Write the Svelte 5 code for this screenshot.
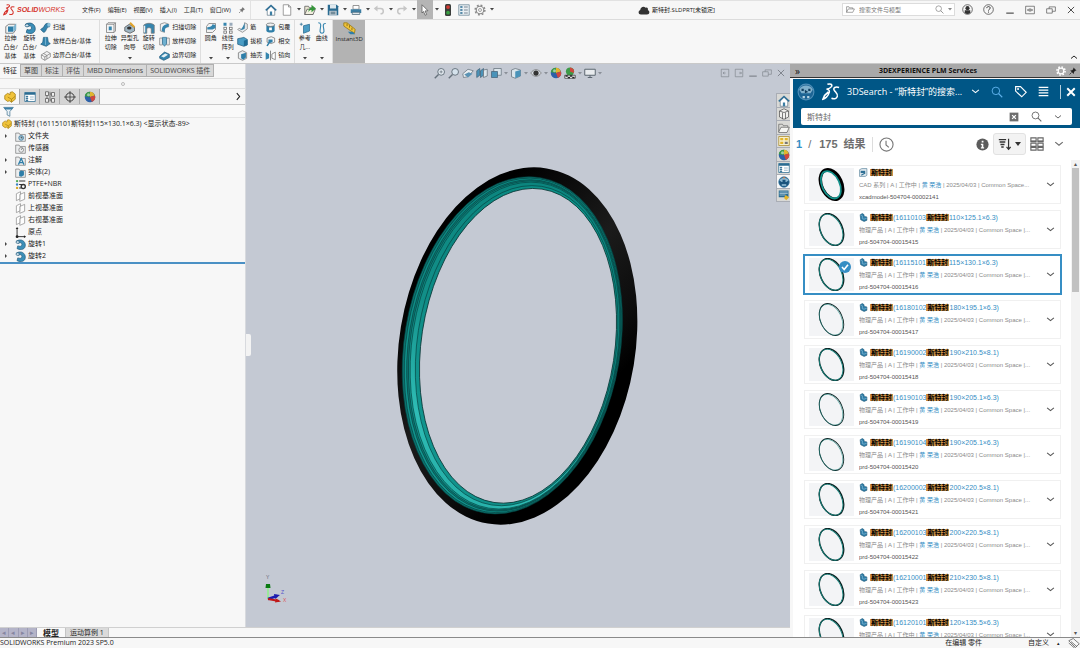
<script lang="ts">
  type Result = { code?: string; dims?: string; id: string; weight: number };

  let query = $state('斯特封');
  let fileQuery = $state('');
  let selected = $state('prd-504704-00015416');

  const menus = ['文件(F)', '编辑(E)', '视图(V)', '插入(I)', '工具(T)', '窗口(W)'];

  const quick = [
    { icon: 'home', label: '主页' },
    { icon: 'page', label: '新建', drop: true },
    { icon: 'open', label: '打开', drop: true },
    { icon: 'save', label: '保存', drop: true },
    { icon: 'print', label: '打印', drop: true },
    { icon: 'undo', label: '撤销', drop: true },
    { icon: 'redo', label: '重做', drop: true },
    { icon: 'cursor', label: '选择', drop: true, on: true },
    { icon: 'traffic', label: '重建模型' },
    { icon: 'list', label: '文件属性' },
    { icon: 'gear', label: '选项', drop: true }
  ];

  const ribbon = [
    {
      big: [
        { icon: 'extrude', lines: ['拉伸', '凸台/', '基体'] },
        { icon: 'revolve', lines: ['旋转', '凸台/', '基体'] }
      ],
      cols: [[
        { icon: 'sweep', text: '扫描' },
        { icon: 'loft', text: '放样凸台/基体' },
        { icon: 'boundary', text: '边界凸台/基体' }
      ]]
    },
    {
      big: [
        { icon: 'cut', lines: ['拉伸', '切除'] },
        { icon: 'hole', lines: ['异型孔', '向导'], drop: true },
        { icon: 'revcut', lines: ['旋转', '切除'] }
      ],
      cols: [[
        { icon: 'sweepcut', text: '扫描切除' },
        { icon: 'loftcut', text: '放样切除' },
        { icon: 'boundcut', text: '边界切除' }
      ]]
    },
    {
      big: [
        { icon: 'fillet', lines: ['圆角'], drop: true },
        { icon: 'pattern', lines: ['线性', '阵列'], drop: true }
      ],
      cols: [
        [
          { icon: 'rib', text: '筋' },
          { icon: 'draft', text: '拔模' },
          { icon: 'shell', text: '抽壳' }
        ],
        [
          { icon: 'wrap', text: '包覆' },
          { icon: 'intersect', text: '相交' },
          { icon: 'mirror', text: '镜向' }
        ]
      ]
    },
    {
      big: [
        { icon: 'refgeo', lines: ['参考', '几...'], drop: true },
        { icon: 'curve', lines: ['曲线'], drop: true }
      ],
      cols: []
    }
  ];

  const commandTabs = ['特征', '草图', '标注', '评估', 'MBD Dimensions', 'SOLIDWORKS 插件'];
  const panelTabs = ['part', 'props', 'config', 'target', 'ball'];

  const tree = [
    { icon: 'folderHist', text: '文件夹', open: true },
    { icon: 'folderSensor', text: '传感器' },
    { icon: 'folderNote', text: '注解', open: true },
    { icon: 'folderBody', text: '实体(2)', open: true },
    { icon: 'material', text: 'PTFE+NBR' },
    { icon: 'plane', text: '前视基准面' },
    { icon: 'plane', text: '上视基准面' },
    { icon: 'plane', text: '右视基准面' },
    { icon: 'origin', text: '原点' },
    { icon: 'revolve', text: '旋转1', open: true },
    { icon: 'revolve', text: '旋转2', open: true }
  ];

  const hud = [
    { icon: 'zoomfit' },
    { icon: 'zoomarea' },
    { icon: 'prevview' },
    { icon: 'section' },
    { icon: 'orient', drop: true },
    { icon: 'cube', drop: true },
    { icon: 'eye', drop: true },
    { icon: 'ball' },
    { icon: 'scene', drop: true },
    { icon: 'monitor', drop: true }
  ];

  const docButtons = ['paneLeft', 'paneRight', 'min', 'restore', 'close'];
  const sideTabs = ['home', 'cylinder', 'folder', 'palette', 'ball', 'props', 'globe', 'forum'];

  const results: Result[] = [
    { id: 'xcadmodel-504704-00002141', weight: 4 },
    { code: '16110103', dims: '110×125.1×6.3', id: 'prd-504704-00015415', weight: 2 },
    { code: '16115101', dims: '115×130.1×6.3', id: 'prd-504704-00015416', weight: 2 },
    { code: '16180102', dims: '180×195.1×6.3', id: 'prd-504704-00015417', weight: 1 },
    { code: '16190002', dims: '190×210.5×8.1', id: 'prd-504704-00015418', weight: 2 },
    { code: '16190103', dims: '190×205.1×6.3', id: 'prd-504704-00015419', weight: 1 },
    { code: '16190104', dims: '190×205.1×6.3', id: 'prd-504704-00015420', weight: 1 },
    { code: '16200002', dims: '200×220.5×8.1', id: 'prd-504704-00015421', weight: 2 },
    { code: '16200103', dims: '200×220.5×8.1', id: 'prd-504704-00015422', weight: 2 },
    { code: '16210001', dims: '210×230.5×8.1', id: 'prd-504704-00015423', weight: 2 },
    { code: '16120101', dims: '120×135.5×6.3', id: 'prd-504704-00015424', weight: 2 }
  ];

  // nested ellipses of the seal, from the outer lip to the bore
  const lip = { cx: 512.3, cy: 345.3, rx: 108, ry: 170, a: 9.5 };
  const bore = { cx: 518, cy: 345.8, rx: 96.7, ry: 158.5, a: 8.7 };
  const bands = [
    { t: 0, fill: '#0b7470' },
    { t: 0.12, fill: 'url(#tealMid)' },
    { t: 0.26, fill: '#0e7773' },
    { t: 0.36, fill: 'url(#tealMid)' },
    { t: 0.46, fill: 'url(#tealHi)' },
    { t: 0.76, fill: 'url(#tealMid)' }
  ].map(({ t, fill }) => ({
    fill,
    cx: lip.cx + (bore.cx - lip.cx) * t,
    cy: lip.cy + (bore.cy - lip.cy) * t,
    rx: lip.rx + (bore.rx - lip.rx) * t,
    ry: lip.ry + (bore.ry - lip.ry) * t,
    a: lip.a + (bore.a - lip.a) * t
  }));

  const folder = '<path d="M1 3h5l1 2h8v10H1z" fill="#eceeef" stroke="#777"/>';
  const icons: Record<string, string> = {
    pin: '<path d="M9 2l5 5-2 .5-2.500 2.500-.5 3-6-6 3-.5L8.500 4z" fill="#777"/><path d="M5 11l-3 3" stroke="#777" stroke-width="1.500"/>',
    home: '<path d="M3 8v7h10V8L8 3z" fill="#fff" stroke="#6a7f8c"/><path d="M1 8.500L8 2l7 6.500" fill="none" stroke="#2f6f96" stroke-width="2"/><path d="M6.500 10h3v5h-3z" fill="#3c7ea3"/>',
    page: '<path d="M3 1h7l3 3v11H3z" fill="#fff" stroke="#808080"/><path d="M10 1v3h3" fill="none" stroke="#808080"/>',
    open: '<path d="M1 3h5l1 2h5v9H1z" fill="#e9e6d2" stroke="#555"/><path d="M4 7h11l-3 7H1z" fill="#f2efdf" stroke="#555"/><path d="M6 11c0-5 2-6 4-6V1l6 5-6 5V8c-2 0-3 .5-4 3z" fill="#35953b"/>',
    save: '<path d="M1 1h12l2 2v12H1z" fill="#2b6c92"/><path d="M4 1h8v5H4z" fill="#dfe9ef"/><path d="M3 9h10v6H3z" fill="#b9c6ce"/><path d="M5 11h6M5 13h6" stroke="#3b5f73"/>',
    print: '<path d="M4 2h8v5H4z" fill="#fff" stroke="#777"/><path d="M1 7h14v5H1z" fill="#3c7ea3"/><path d="M3 11h10v3H3z" fill="#dfe6ea" stroke="#4b6a7b"/>',
    undo: '<path d="M3 6h7c5 0 5 7 0 7" fill="none" stroke="#c6c6c6" stroke-width="2"/><path d="M6 2L1 6l5 4z" fill="#c6c6c6"/>',
    redo: '<path d="M13 6H6c-5 0-5 7 0 7" fill="none" stroke="#c6c6c6" stroke-width="2"/><path d="M10 2l5 4-5 4z" fill="#c6c6c6"/>',
    cursor: '<path d="M4 1l8 8-4 .3 2.200 4.700-2 1-2.200-5L4 12z" fill="#fff" stroke="#555"/>',
    traffic: '<rect x="4" y="0" width="8" height="16" rx="2" fill="#3a3d3a"/><circle cx="8" cy="4" r="2.500" fill="#d33a33"/><circle cx="8" cy="11.500" r="2.500" fill="#3aa043"/>',
    list: '<path d="M1 1h14v14H1z" fill="#e7eef2" stroke="#6c8797"/><path d="M3 3h3v2H3zM3 7h3v2H3zM3 11h3v2H3z" fill="#2b6c92"/><path d="M8 4h5M8 8h5M8 12h5" stroke="#567"/>',
    gear: '<circle cx="8" cy="8" r="5" fill="none" stroke="#8a8a8a" stroke-width="1.500"/><circle cx="8" cy="8" r="6.500" fill="none" stroke="#8a8a8a" stroke-width="2" stroke-dasharray="2.500 2.600"/><circle cx="8" cy="8" r="2" fill="none" stroke="#8a8a8a"/>',
    gearWhite: '<circle cx="8" cy="8" r="4.500" fill="none" stroke="#fff" stroke-width="2"/><circle cx="8" cy="8" r="6.500" fill="none" stroke="#fff" stroke-width="2.500" stroke-dasharray="2.500 2.600"/>',
    pinDark: '<path d="M9 1l6 6-2.500.5-2.500 2.500-.5 4-7-7 4-.5L8.500 4z" fill="#222"/><path d="M5 11l-4 4" stroke="#222" stroke-width="1.500"/>',
    extrude: '<path d="M1 6l4-3h9v8l-3 4H1z" fill="#eef1f2" stroke="#666"/><path d="M4 6h7v7H4z" fill="#2e7ea8"/><path d="M11 6l4-4v8l-4 3z" fill="#7cb4d0"/>',
    revolve: '<path d="M2 3c7-4 13 0 13 6s-6 8-12 5l1-4c3 1 6 1 6-2S8 5 5 6z" fill="#3c8fb8" stroke="#205a7c"/><ellipse cx="4" cy="4.500" rx="2.500" ry="2" fill="#cfe3ee" stroke="#205a7c"/>',
    sweep: '<path d="M1 11l4 4c5 0 3-8 9-8l-1-5C5 1 7 9 3 9z" fill="#3585ae" stroke="#1d587a"/><ellipse cx="13" cy="4" rx="2.500" ry="3" fill="#8fc2db"/>',
    loft: '<path d="M5 2h6l1 7 3 2-6 4-8-3 3-3z" fill="#3585ae" stroke="#1d587a"/><path d="M8 2v11" stroke="#8fc2db"/>',
    boundary: '<path d="M2 7l8-5 5 3v5l-8 5-5-3z" fill="#f3f3f3" stroke="#777"/><path d="M2 7l5 3 8-5M7 10v5M5 5l5 3v5" fill="none" stroke="#777"/>',
    cut: '<path d="M2 3l2-2h10v11l-2 2H2z" fill="#f4f4f4" stroke="#777"/><path d="M2 3h10v11M12 3l2-2" fill="none" stroke="#777"/><rect x="5" y="6" width="4" height="5" fill="#3585ae"/>',
    hole: '<path d="M1 7l6-4 7 4v5l-6 3-7-3z" fill="#9fb6c3" stroke="#555"/><ellipse cx="7" cy="8" rx="3" ry="2" fill="#333"/><path d="M8 1l6 6" stroke="#e2a52c" stroke-width="2.500"/>',
    revcut: '<path d="M1 4c4-3 10-3 14 0v11h-4V9c-1-2-5-2-6 0v6H1z" fill="#3585ae" stroke="#777"/><path d="M2 5v9" stroke="#eee" stroke-width="2"/>',
    sweepcut: '<path d="M2 3l6-2 6 2v4l-6 1v7l-6-2z" fill="#f2f2f2" stroke="#777"/><path d="M4 13C4 6 8 3 14 3v4c-4 0-6 3-6 8z" fill="#3585ae"/>',
    loftcut: '<path d="M1 3h4v10H1zM11 3h4v10h-4z" fill="#f2f2f2" stroke="#777"/><path d="M5 2h6v9l-3 4-3-4z" fill="#6fb0cf" stroke="#2b6c92"/>',
    boundcut: '<path d="M1 9l7-6 7 3v5l-8 4-6-3z" fill="#3585ae" stroke="#1d587a"/><path d="M3 9l6-4 4 2-6 4z" fill="#e6f0f5"/>',
    fillet: '<path d="M2 6l3-4h9v8l-4 4H2z" fill="#f2f2f2" stroke="#777"/><path d="M3 7c4 0 6-1 7-4l4 1v4l-4 2H3z" fill="#3585ae"/>',
    pattern: '<g fill="#3585ae"><rect x="2" y="1" width="4" height="4"/><rect x="10" y="1" width="4" height="4" fill="#9ab"/></g><g fill="#fff" stroke="#666"><rect x="2.500" y="7" width="3.500" height="3"/><rect x="10" y="7" width="3.500" height="3"/><rect x="2.500" y="12" width="3.500" height="3"/><rect x="10" y="12" width="3.500" height="3"/></g>',
    rib: '<path d="M1 11l7 4 7-5V3l-4-2v7l-4 3-4-2z" fill="#e9edef" stroke="#777"/><path d="M11 1v9l-7 2C8 9 9 6 11 1z" fill="#3585ae"/>',
    draft: '<path d="M1 4l9-2 5 3v8l-5 2-9-3z" fill="#4a9cc4" stroke="#1d587a"/><path d="M10 7l5-2v8l-5 2z" fill="#1f6b94"/>',
    shell: '<path d="M2 4l6-3 6 3v8l-6 3-6-3z" fill="#e9edef" stroke="#666"/><path d="M6 6l7-2v7l-4 3-3-2z" fill="#2e7ea8"/>',
    wrap: '<path d="M2 4v9c2 3 10 3 12 0V4z" fill="#2e7ea8"/><ellipse cx="8" cy="4" rx="6" ry="2.500" fill="#eef1f2" stroke="#666"/><path d="M6 8h4v4H6z" fill="#fff"/>',
    intersect: '<path d="M3 3l6-2 5 2v6l-5 2-6-2z" fill="#f4f4f4" stroke="#666"/><path d="M5 5h6v4l-4 1-3 5-2-1 3-5z" fill="#2e7ea8"/>',
    mirror: '<path d="M1 3l5 3v6l-5 2z" fill="#3585ae"/><path d="M8 1v14" stroke="#555"/><path d="M15 3l-5 3v6l5 2z" fill="#fff" stroke="#666"/>',
    refgeo: '<path d="M6 5l8-2v9l-8 3z" fill="#4a9cc4" stroke="#2b6c92"/><path d="M1 3h4M3 1v4" stroke="#2b6c92"/>',
    curve: '<path d="M3 1c8 0-2 14 5 14S5 1 13 2" fill="none" stroke="#3585ae" stroke-width="1.500"/>',
    ruler: '<path d="M1 1h4l10 8-1 5L1 5z" fill="#f0c33a" stroke="#9a7a18"/><path d="M5 2v3M8 4v3M11 7v3" stroke="#7c6212"/><path d="M6 12h6l3 3H9z" fill="#2e7ea8"/>',
    cloud: '<path d="M4 14c-4 0-4-5-1-6 0-4 5-6 7-3 3-1 4 2 3 3 3 1 3 6-1 6z" fill="#333"/>',
    folderOpen: '<path d="M1 13V3h4l1 2h6v2" fill="none" stroke="#666"/><path d="M1 13l3-6h11l-3 6z" fill="none" stroke="#666"/>',
    search: '<circle cx="6.500" cy="6.500" r="5" fill="none" stroke="currentColor" stroke-width="1.300"/><path d="M10 10l5 5" stroke="currentColor" stroke-width="1.500"/>',
    user: '<circle cx="8" cy="8" r="7" fill="none" stroke="#333"/><circle cx="8" cy="6" r="3" fill="#333"/><path d="M4 13V9h8v4c-2 2-6 2-8 0z" fill="#333"/>',
    help: '<circle cx="8" cy="8" r="7" fill="none" stroke="#333"/><path d="M5.500 6c0-3 5-3 5 0 0 1.500-2.500 1.700-2.500 3.500M8 11v1.500" fill="none" stroke="#333" stroke-width="1.400"/>',
    min: '<path d="M2 13h12" stroke="currentColor" stroke-width="1.800"/>',
    dockWin: '<path d="M1 2h14v12H1z" fill="none" stroke="#444"/><path d="M4 8h8M6 6L4 8l2 2M10 6l2 2-2 2M8 5v6" fill="none" stroke="#444"/>',
    restore: '<path d="M1 6h9v7H1zM5 6V3h10v7h-5" fill="none" stroke="currentColor"/>',
    close: '<path d="M3 3l10 10M13 3L3 13" stroke="currentColor" stroke-width="1.500"/>',
    part: '<path d="M1 6l4-3 3 2V2l3-1 4 3v7l-5 4-3-2-2 1-4-3z" fill="#f0c33a" stroke="#a47d12"/><path d="M5 8l5 3 5-4M10 11v4" fill="none" stroke="#a47d12"/>',
    props: '<path d="M1 2h14v12H1z" fill="#fff" stroke="#2b6c92"/><path d="M1 2h14v3H1z" fill="#2b6c92"/><path d="M3 7h2v1H3zM3 9.500h2v1H3zM3 12h2v1H3z" fill="#2b6c92" stroke="#2b6c92"/><path d="M8 8h5M8 11h5" stroke="#7ba3ba"/>',
    config: '<path d="M2 1h4v5H2zM2 10h4v5H2zM10 2h4v5h-4zM10 10h4v5h-4z" fill="#eee" stroke="#555"/><path d="M4 6v4M8 1v13M8 4h2M8 12h2" stroke="#555"/>',
    target: '<circle cx="8" cy="8" r="5.500" fill="none" stroke="#333" stroke-width="1.300"/><path d="M8 0v16M0 8h16" stroke="#333"/>',
    ball: '<circle cx="8" cy="8" r="7" fill="#2c61a8"/><path d="M8 8V1a7 7 0 0 1 6.500 5z" fill="#e0b52c"/><path d="M8 8V1a7 7 0 0 0-7 6z" fill="#3d9a46"/><path d="M8 8l6.500-2a7 7 0 0 1-4 8.500z" fill="#d0473d"/><circle cx="6" cy="5" r="2" fill="#fff" opacity=".5"/>',
    filter: '<path d="M1 2h14l-5 6v7l-4-2V8z" fill="#e9f1f6" stroke="#3a6d8c"/><path d="M1 2h14l-2 3H3z" fill="#3a7ea5"/>',
    folderHist: folder + '<circle cx="9" cy="10" r="3.500" fill="#a9cadb" stroke="#2b6c92"/><path d="M9 8v2h2" fill="none" stroke="#222"/>',
    folderSensor: folder + '<circle cx="9" cy="10" r="3.500" fill="none" stroke="#777"/><path d="M9 10l2-3" stroke="#555"/>',
    folderNote: folder + '<path d="M5 14l4-9 4 9M6.500 11h5" fill="none" stroke="#2e7ea8" stroke-width="1.800"/>',
    folderBody: folder + '<path d="M6 7l3-2 4 1v6l-4 2-3-1z" fill="#2e7ea8"/>',
    material: '<g stroke="#333" stroke-width="1.500"><path d="M6 3h9M6 8h5M6 13h3"/></g><circle cx="3" cy="3" r="1.700" fill="#4fa854"/><circle cx="3" cy="8" r="1.700" fill="#3b82c4"/><circle cx="3" cy="13" r="1.700" fill="#d7a728"/><circle cx="12" cy="11" r="3" fill="none" stroke="#333" stroke-width="2"/>',
    plane: '<path d="M2 4l6-3v10l-6 3z" fill="#fff" stroke="#888"/><path d="M7 5l7-3v10l-7 3z" fill="#fff" fill-opacity=".7" stroke="#888"/>',
    origin: '<path d="M3 2v12h12" fill="none" stroke="#222" stroke-width="1.300"/><path d="M3 0l2 3H1zM16 14l-3-2v4z" fill="#222"/><circle cx="3" cy="14" r="2" fill="#222"/>',
    zoomfit: '<circle cx="9.500" cy="6.500" r="4.500" fill="#e3eaf0" stroke="#66727c" stroke-width="1.300"/><path d="M6 10l-5 5" stroke="#66727c" stroke-width="2"/><path d="M7.500 6.500h4M9.500 4.500v4" stroke="#66727c"/>',
    zoomarea: '<circle cx="9.500" cy="6.500" r="4.500" fill="#d5e2ec" stroke="#66727c" stroke-width="1.300"/><path d="M6 10l-5 5" stroke="#66727c" stroke-width="2"/>',
    prevview: '<path d="M1 9l7-6 7 2-7 8-6 1z" fill="#e8edf0" stroke="#66727c"/><path d="M3 10l6-3 5 2-6 5z" fill="#5b93b4"/>',
    section: '<path d="M1 5l4-3v9l-4 3zM6 5l4-3v9l-4 3z" fill="#4a93b9" stroke="#47647a"/><path d="M10 4l5-1v9l-5 2z" fill="#dbe5eb" stroke="#66727c"/>',
    orient: '<path d="M5 2h10v9H5z" fill="#dbe5eb" stroke="#66727c"/><path d="M2 6h8v8H2z" fill="#4a93b9" stroke="#47647a"/>',
    cube: '<path d="M2 4l5-2 7 2v8l-7 3-5-2z" fill="#dbe5eb" stroke="#66727c"/><path d="M7 6l7-2v8l-7 3z" fill="#4a93b9"/>',
    eye: '<path d="M1 8c4-6 10-6 14 0-4 6-10 6-14 0z" fill="#d5dbe1" stroke="#777"/><circle cx="8" cy="8" r="3.500" fill="#333"/>',
    scene: '<circle cx="8" cy="6" r="5.500" fill="#3d9a46"/><path d="M8 6V.5A5.500 5.500 0 0 1 13 8z" fill="#d0473d"/><path d="M1 11h14v4H1z" fill="#fff" stroke="#333"/><path d="M2 11h3v2H2zM8 11h3v2H8zM5 13h3v2H5zM11 13h3v2h-3z" fill="#222"/>',
    monitor: '<path d="M1 3h14v8H1z" fill="#e8ebee" stroke="#59646e" stroke-width="1.300"/><path d="M8 11v3M5 14h6" stroke="#59646e" stroke-width="1.300"/>',
    paneLeft: '<path d="M2 2h12v12H2z" fill="none" stroke="currentColor"/><path d="M5 8h4M7 6L5 8l2 2" fill="none" stroke="currentColor"/>',
    paneRight: '<path d="M2 2h12v12H2z" fill="none" stroke="currentColor"/><path d="M12 8H8M10 6l2 2-2 2" fill="none" stroke="currentColor"/>',
    cylinder: '<path d="M2 4l6-3 6 3v8l-6 3-6-3z" fill="#f1f1ee" stroke="#555"/><path d="M2 4l6 2 6-2M6 6v9M10 6v9" fill="none" stroke="#555"/>',
    folder: '<path d="M1 3h5l1 2h6v2M1 3v11h11l3-7H4l-3 6" fill="#f5f5f2" stroke="#666"/>',
    palette: '<path d="M1 2h14v12H1z" fill="#f6efcf" stroke="#a98b2a"/><path d="M3 4h4v3H3zM9 4h4v3H9zM3 9h4v3H3z" fill="#e2b42a"/><path d="M9 9h4v3H9z" fill="#777"/>',
    globe: '<circle cx="8" cy="8" r="7" fill="#1b547c" stroke="#3d7fa8"/><path d="M2 6c2-5 10-5 12 0l-3 2H5z" fill="#8db9d2"/><path d="M6 5h4v3H6z" fill="#1b547c"/><path d="M8 1l2 2H6z" fill="#e07a3a"/><path d="M5 11h6v2H5z" fill="#9cc6dd"/>',
    compass: '<circle cx="8" cy="8" r="7" fill="#1d6494" stroke="#4f8fb8"/><path d="M2 6c2-5 10-5 12 0l-2 3H4z" fill="#7fb0cc"/><path d="M4 5h2v2H4zM10 5h2v2h-2zM7 6l3 2-3 1z" fill="#123f60"/><path d="M5 11.500h2v2H5zM9 11.500h2v2H9z" fill="#b8d4e4"/>',
    forum: '<path d="M1 2h13v9H1z" fill="#2b6c92"/><path d="M2 4h11M2 6h11M2 8h8" stroke="#b7d1df"/><path d="M10 8l5 3-4 4-3-3z" fill="#e2b42a"/>',
    tag: '<path d="M2 2h6l7 7-5.500 5.500-7.500-7z" fill="none" stroke="#fff" stroke-width="1.400"/><circle cx="5" cy="5" r="1.200" fill="#fff"/>',
    burger: '<path d="M1 2h14M1 6h14M1 10h14M1 14h14" stroke="#fff" stroke-width="1.800"/>',
    closeBold: '<path d="M3 3l10 10M13 3L3 13" stroke="#fff" stroke-width="2.600"/>',
    chevron: '<path d="M2 5l6 5 6-5" fill="none" stroke="currentColor" stroke-width="2"/>',
    clear: '<rect x="1" y="1" width="14" height="14" fill="#6e6e6e"/><path d="M5 5l6 6M11 5l-6 6" stroke="#fff" stroke-width="2"/>',
    clock: '<circle cx="8" cy="8" r="7" fill="none" stroke="#777" stroke-width="1.200"/><path d="M7.500 4v4.500l3 2.500" fill="none" stroke="#777" stroke-width="1.200"/>',
    info: '<circle cx="8" cy="8" r="7.500" fill="#5c5c5c"/><path d="M7 3.500h2.200v2H7zM6 7h3v4.500h1V13H6v-1.500h1v-3H6z" fill="#fff"/>',
    sort: '<path d="M1 2h9M2 5h7M3 8h5M4 11h3" stroke="#333" stroke-width="1.800"/><path d="M13 1v12M10.500 11l2.500 3 2.500-3" fill="none" stroke="#333" stroke-width="1.500"/>',
    grid: '<g fill="none" stroke="#666" stroke-width="1.300"><path d="M1 1h6v4H1zM9 1h6v4H9zM1 7h6v4H1zM9 7h6v4H9z"/><path d="M1 12h6v3H1zM9 12h6v3H9z"/></g><path d="M1 5h6M9 5h6M1 11h6M9 11h6" stroke="#666" stroke-width="2"/>',
    cad: '<path d="M1 3l4-2h9v12l-3 2H1z" fill="#dfe8ed" stroke="#3f6f8b"/><path d="M3 5h8v4H3z" fill="#2e6f95"/><path d="M4 13l7-4" stroke="#2e6f95" stroke-width="2"/>',
    product: '<path d="M2 3l4-2 3 2v3l5 1v6l-5 2-6-3z" fill="#2e7ea8" stroke="#174e6e"/><path d="M2 3l4 2v5l3 1 5-2" fill="none" stroke="#9cc6dd"/>',
    tags: '<path d="M1 5l6-3 8 7-5 5z" fill="none" stroke="#555"/><path d="M1 8l8 7M4 6l8 7" stroke="#555"/>'
  };
</script>

{#snippet icon(name: string, size = 11)}
  <svg class="icon" width={size} height={size} viewBox="0 0 16 16" aria-hidden="true">{@html icons[name]}</svg>
{/snippet}

{#snippet arrow()}
  <svg class="icon" width="4" height="3" viewBox="0 0 4 3" aria-hidden="true"><path d="M0 0h4L2 2.500z" fill="currentColor" /></svg>
{/snippet}

{#snippet dsLogo(color: string, w: number)}
  <svg class="icon" width={w} height={w} viewBox="0 0 20 20" fill="none" stroke={color} stroke-width="1.700" aria-hidden="true">
    <path d="M6 1.500c3-1 6 0 4.500 2.500C9 6 5 7 5 7s4-.3 3 3.500C7 15 3 17.500 1 18c1-3 3-6 6-8" />
    <path d="M19 5c-4-1.500-7 .5-5.500 3s4.500 4 3.500 7-4 3-6.500 2" />
  </svg>
{/snippet}

<div class="app">
  <header class="titlebar">
    <div class="brand">
      {@render dsLogo('#d5322b', 12)}
      <span><b>SOLID</b>WORKS</span>
    </div>
    <nav class="menus">
      {#each menus as menu}
        <button>{menu}</button>
      {/each}
      <button aria-label="固定">{@render icon('pin', 8)}</button>
    </nav>
    <div class="quick">
      {#each quick as item}
        <button class="tool" class:on={item.on} aria-label={item.label}>{@render icon(item.icon, 12)}</button>
        {#if item.drop}<button class="drop" aria-label="{item.label}菜单">{@render arrow()}</button>{/if}
      {/each}
    </div>
    <div class="doc-title">{@render icon('cloud', 12)}<span>斯特封.SLDPRT[未锁定]</span></div>
    <div class="file-search">
      {@render icon('folderOpen', 9)}
      <input type="text" aria-label="搜索文件与模型" placeholder="搜索文件与模型" bind:value={fileQuery} />
      {@render icon('search', 9)}
      {@render arrow()}
    </div>
    <div class="window-buttons">
      <button aria-label="用户">{@render icon('user', 11)}</button>
      <button aria-label="帮助">{@render icon('help', 11)}</button>
      <button aria-label="最小化">{@render icon('min', 10)}</button>
      <button aria-label="停靠">{@render icon('dockWin', 10)}</button>
      <button aria-label="还原">{@render icon('restore', 10)}</button>
      <button aria-label="关闭">{@render icon('close', 10)}</button>
    </div>
  </header>

  <section class="ribbon">
    {#each ribbon as group}
      <div class="group">
        {#each group.big as cmd}
          <button class="big">
            {@render icon(cmd.icon, 12)}
            {#each cmd.lines as line}<span>{line}</span>{/each}
            {#if cmd.drop}<i>{@render arrow()}</i>{/if}
          </button>
        {/each}
        {#each group.cols as col}
          <div class="col">
            {#each col as cmd}
              <button class="small">{@render icon(cmd.icon, 11)}{cmd.text}</button>
            {/each}
          </div>
        {/each}
      </div>
    {/each}
    <button class="instant">{@render icon('ruler', 13)}<span>Instant3D</span></button>
    <button class="collapse" aria-label="折叠">{@render icon('chevron', 8)}</button>
  </section>

  <main>
    <div class="document">
      <div class="workspace">
        <aside class="manager">
          <div class="command-tabs">
            {#each commandTabs as tab, i}
              <button class:active={i === 0}>{tab}</button>
            {/each}
          </div>
          <div class="grip"><span></span></div>
          <div class="panel-tabs">
            {#each panelTabs as tab, i}
              <button class:active={i === 0} aria-label={tab}>{@render icon(tab, 12)}</button>
            {/each}
            <button class="more" aria-label="更多">{@render icon('chevron', 9)}</button>
          </div>
          <div class="filter">{@render icon('filter', 11)}</div>
          <div class="tree">
            <div class="root">{@render icon('part', 10)}<span>斯特封 (16115101斯特封115×130.1×6.3) &lt;显示状态-89&gt;</span></div>
            <ul>
              {#each tree as node}
                <li><i class:open={node.open}></i>{@render icon(node.icon, 11)}<span>{node.text}</span></li>
              {/each}
            </ul>
          </div>
        </aside>

        <div class="viewport">
          <svg class="model" width="260" height="374" viewBox="388 159 260 374" role="img" aria-label="斯特封">
            <defs>
              <linearGradient id="tealMid" x1="1" y1="0" x2="0" y2="1">
                <stop offset="0" stop-color="#0c9a8f" />
                <stop offset=".5" stop-color="#0b837d" />
                <stop offset="1" stop-color="#149c95" />
              </linearGradient>
              <linearGradient id="tealHi" x1=".3" y1="0" x2="0" y2="1">
                <stop offset="0" stop-color="#0b857e" />
                <stop offset=".45" stop-color="#128f88" />
                <stop offset=".75" stop-color="#2fbdb6" />
                <stop offset="1" stop-color="#1fa59e" />
              </linearGradient>
              <linearGradient id="rubber" x1=".4" y1="0" x2="1" y2=".6">
                <stop offset="0" stop-color="#000" />
                <stop offset=".45" stop-color="#1b1b1b" />
                <stop offset=".75" stop-color="#0c0c0c" />
                <stop offset=".9" stop-color="#000" />
              </linearGradient>
            </defs>
            <ellipse cx="517.300" cy="346" rx="118" ry="180" fill="url(#rubber)" transform="rotate(9.400 517.300 346)" />
            {#each bands as b}
              <ellipse cx={b.cx} cy={b.cy} rx={b.rx} ry={b.ry} fill={b.fill} stroke="#053c3a" stroke-width=".6" transform="rotate({b.a} {b.cx} {b.cy})" />
            {/each}
            <ellipse cx={bore.cx} cy={bore.cy} rx={bore.rx} ry={bore.ry} fill="#c4c9d3" stroke="#063433" stroke-width=".8" transform="rotate({bore.a} {bore.cx} {bore.cy})" />
          </svg>

          <div class="hud">
            {#each hud as item}
              <button aria-label={item.icon}>{@render icon(item.icon, 12)}</button>
              {#if item.drop}{@render arrow()}{/if}
            {/each}
          </div>
          <div class="doc-buttons">
            {#each docButtons as b}
              <button aria-label={b}>{@render icon(b, 10)}</button>
            {/each}
          </div>
          <div class="side-tabs">
            {#each sideTabs as tab}
              <button class:active={tab === 'globe'} aria-label={tab}>{@render icon(tab, 12)}</button>
            {/each}
          </div>
          <div class="splitter"></div>
          <svg class="triad" width="26" height="30" viewBox="0 0 26 30" aria-hidden="true">
            <path d="M6 24V13" stroke="#9be89b" stroke-width="2" />
            <path d="M3.500 13h5L8 9H4z" fill="#0a7a12" />
            <path d="M6 24l9-3" stroke="#1c1cb0" stroke-width="2.500" />
            <path d="M12 19l6 1-5 4z" fill="#1c1cb0" />
            <path d="M6 24l11 2" stroke="#c01818" stroke-width="2" />
            <path d="M14 23.500l5 3-6 1z" fill="#c01818" />
            <text x="4" y="4" fill="#667">Y</text>
            <text x="19" y="19" fill="#55c">Z</text>
            <text x="21" y="27" fill="#d55">X</text>
          </svg>
        </div>
      </div>

      <div class="doc-tabs">
        <div class="nav">
          {#each ['◂', '◂', '▸', '▸'] as n, i}
            <button aria-label="标签 {i + 1}">{n}</button>
          {/each}
        </div>
        <button class="active">模型</button>
        <button>运动算例 1</button>
      </div>
    </div>

    <aside class="dock">
      <div class="dock-title">
        <span>»</span>
        <b>3DEXPERIENCE PLM Services</b>
        {@render icon('gearWhite', 10)}
        {@render icon('pinDark', 8)}
      </div>
      <div class="panel">
        <div class="search-head">
          <div class="head-row">
            {@render icon('compass', 18)}
            {@render dsLogo('#fff', 18)}
            <h1>3DSearch - “斯特封”的搜索...</h1>
            <button aria-label="展开">{@render icon('chevron', 9)}</button>
            <button class="find" aria-label="搜索">{@render icon('search', 12)}</button>
            <button aria-label="标记">{@render icon('tag', 13)}</button>
            <button aria-label="菜单">{@render icon('burger', 11)}</button>
            <button class="end" aria-label="关闭">{@render icon('closeBold', 12)}</button>
          </div>
          <div class="search-box">
            <input type="text" aria-label="3DSearch" bind:value={query} />
            <button aria-label="清除" onclick={() => (query = '')}>{@render icon('clear', 10)}</button>
            <button aria-label="搜索">{@render icon('search', 11)}</button>
            <button aria-label="选项">{@render icon('chevron', 8)}</button>
          </div>
        </div>

        <div class="summary">
          <strong>1</strong><span>/</span><b>175</b><b>结果</b>
          <button class="history" aria-label="历史">{@render icon('clock', 15)}</button>
          <button aria-label="信息">{@render icon('info', 13)}</button>
          <button class="sort" aria-label="排序">{@render icon('sort', 13)}<i></i></button>
          <button aria-label="视图">{@render icon('grid', 14)}</button>
          <button class="last" aria-label="更多">{@render icon('chevron', 10)}</button>
        </div>

        <div class="list-wrap">
          <ul class="results">
            {#each results as r}
              <li class:selected={r.id === selected}>
                <button class="thumb" aria-label={r.id} onclick={() => (selected = r.id)}>
                  <svg width="45" height="33" viewBox="0 0 45 33" aria-hidden="true">
                    <g transform="rotate(-25 22.500 16.500)" fill="none">
                      {#if r.weight === 4}
                        <ellipse cx="22.500" cy="16.500" rx="10" ry="15.500" stroke="#000" stroke-width="3.500" />
                        <ellipse cx="21.800" cy="16.500" rx="8.800" ry="14.500" stroke="#12908a" stroke-width="1.800" />
                      {:else}
                        <ellipse cx="22.500" cy="16.500" rx="11" ry="16.800" stroke="#0a1f1f" stroke-width={r.weight === 2 ? 1.4 : 0.9} />
                        <ellipse cx="22" cy="16.500" rx="10.600" ry="16.400" stroke="#16827c" stroke-width={r.weight === 2 ? 0.9 : 0.5} />
                      {/if}
                    </g>
                  </svg>
                </button>
                {#if r.id === selected}
                  <svg class="check" width="12" height="12" viewBox="0 0 12 12" aria-hidden="true">
                    <circle cx="6" cy="6" r="6" fill="#368ec4" />
                    <path d="M3 6l2.200 2.500L9 3.800" fill="none" stroke="#fff" stroke-width="1.600" />
                  </svg>
                {/if}
                <div class="info">
                  <h2>
                    {@render icon(r.code ? 'product' : 'cad', 9)}
                    <a href="#{r.id}"><mark>斯特封</mark>{#if r.code}({r.code}<mark>斯特封</mark>{r.dims}){/if}</a>
                  </h2>
                  <p>{r.code ? '物理产品' : 'CAD 系列'} | A | 工作中 | <a href="#owner">黄 荣浩</a> | 2025/04/03 | Common Space{r.code ? ' |...' : '...'}</p>
                  <p class="id">{r.id}</p>
                </div>
                <button class="expand" aria-label="展开">{@render icon('chevron', 9)}</button>
              </li>
            {/each}
          </ul>
          <div class="scrollbar"><i>▴</i><span></span><i>▾</i></div>
        </div>
      </div>
    </aside>
  </main>

  <footer>
    <span class="version">SOLIDWORKS Premium 2023 SP5.0</span>
    <span class="editing">在编辑 零件</span>
    <span class="custom">自定义</span>
    <span class="dot">▴</span>
    {@render icon('tags', 12)}
  </footer>
</div>

<style>
  :global(body) {
    margin: 0;
  }

  .app {
    display: flex;
    flex-direction: column;
    height: 100vh;
    overflow: hidden;
    background: #f7f7f7;
    color: #222;
    font: 7px/8px 'Open Sans', 'Noto Sans CJK SC', sans-serif;
    white-space: nowrap;
  }

  button, input {
    font: inherit;
    color: inherit;
    background: none;
    border: 0;
    padding: 0;
    margin: 0;
    min-width: 0;
  }

  button {
    display: inline-flex;
    align-items: center;
    justify-content: center;
  }

  i {
    font-style: normal;
    font-size: 6px;
  }

  ul, h1, h2, p {
    margin: 0;
    padding: 0;
    list-style: none;
    font-weight: 400;
  }

  a {
    color: #368ec4;
    text-decoration: none;
  }

  .icon {
    flex: none;
    display: block;
  }

  .titlebar {
    display: flex;
    align-items: center;
    height: 19px;
    flex: none;
    border-bottom: 1px solid #dcdcdc;
    box-shadow: inset 0 1px #e2e2e2;
    font-size: 6px;
  }

  .brand {
    display: flex;
    align-items: center;
    gap: 2px;
    width: 79px;
    padding-left: 3px;
    box-sizing: border-box;
    color: #d5322b;
    font: italic 7px/8px 'Liberation Sans', sans-serif;
  }

  .menus {
    display: flex;
    align-items: center;
    align-self: stretch;
    gap: 7px;
    width: 168px;
    padding-left: 3px;
    border-right: 1px solid #e2e2e2;
  }

  .quick {
    display: flex;
    align-items: center;
    align-self: stretch;
    padding-left: 12px;
  }

  .tool {
    width: 16px;
    height: 100%;
  }

  .tool.on {
    background: #b5b5b5;
  }

  .drop {
    width: 7px;
    color: #444;
  }

  .doc-title {
    display: flex;
    align-items: center;
    gap: 2px;
    margin: 0 auto;
    padding-left: 16px;
  }

  .file-search {
    display: flex;
    align-items: center;
    gap: 4px;
    width: 113px;
    height: 13px;
    box-sizing: border-box;
    padding: 0 2px 0 3px;
    border: 1px solid #dcdcdc;
    background: #fff;
    color: #888;
  }

  .file-search input {
    flex: 1;
    outline: 0;
  }

  .window-buttons {
    display: flex;
    width: 125px;
    justify-content: space-between;
    align-items: center;
    padding: 0 4px 0 7px;
    box-sizing: border-box;
    color: #444;
  }

  .ribbon {
    display: flex;
    height: 43px;
    flex: none;
    border-bottom: 1px solid #c9c9c9;
    font-size: 6px;
  }

  .group {
    display: flex;
    padding: 0 2px 0 1px;
    border-right: 1px solid #dedede;
  }

  .group:first-child {
    padding-right: 6px;
  }

  .big {
    flex-direction: column;
    justify-content: flex-start;
    width: 19px;
    padding-top: 2px;
    line-height: 9px;
  }

  .group:nth-child(n + 3) .big {
    width: 17px;
  }

  .big i {
    margin-top: auto;
    padding-bottom: 3px;
    color: #444;
  }

  .col {
    display: grid;
    grid-template-rows: repeat(3, 14px);
    padding-left: 1px;
    padding-right: 2px;
  }

  .small {
    justify-content: flex-start;
    gap: 2px;
  }

  .instant {
    flex-direction: column;
    justify-content: flex-start;
    width: 32px;
    padding-top: 2px;
    background: #b3b3b3;
  }

  .collapse {
    margin-left: auto;
    align-self: flex-end;
    padding: 2px;
    rotate: 180deg;
  }

  main {
    display: flex;
    flex: 1;
    min-height: 0;
  }

  .document {
    display: flex;
    flex-direction: column;
    flex: 1;
    min-width: 0;
  }

  .workspace {
    display: flex;
    flex: 1;
    min-height: 0;
  }

  .manager {
    width: 246px;
    flex: none;
    box-sizing: border-box;
    border-right: 1px solid #d8dade;
    background: #f7f7f7;
  }

  .command-tabs {
    display: flex;
    height: 13px;
  }

  .command-tabs button {
    padding: 0 3px;
    border: 1px solid #b0b0b0;
    border-left: 0;
    background: #d8d8d8;
    color: #444;
  }

  .command-tabs .active {
    background: #f7f7f7;
    border-bottom: 0;
    border-top: 0;
    color: #111;
  }

  .grip {
    display: flex;
    align-items: center;
    justify-content: center;
    height: 9px;
    margin-top: 1px;
    border: solid #e0e0e0;
    border-width: 1px 0;
  }

  .grip span {
    width: 2px;
    height: 2px;
    border: 1px solid #bbb;
    border-radius: 2px;
  }

  .panel-tabs {
    display: flex;
    height: 15px;
    border-bottom: 1px solid #c8c8c8;
  }

  .panel-tabs button {
    width: 20px;
    box-sizing: border-box;
    border-right: 1px solid #aaa;
    background: #d4d4d4;
  }

  .panel-tabs .active, .panel-tabs .more {
    background: none;
  }

  .panel-tabs .more {
    margin-left: auto;
    width: 13px;
    border: 0;
    rotate: -90deg;
  }

  .filter {
    padding: 1px 3px 0;
    border-bottom: 1px solid #e6e6e6;
    background: #f9f9f9;
  }

  .tree {
    border-bottom: 2px solid #4a90c4;
  }

  .root, .tree li {
    display: flex;
    align-items: center;
    gap: 2px;
    height: 12px;
  }

  .root {
    padding-left: 2px;
  }

  .tree li {
    padding-left: 5px;
  }

  .tree li i {
    width: 5px;
    margin-right: 3px;
  }

  .tree li .open::before {
    content: '';
    display: block;
    width: 0;
    border: 2px solid transparent;
    border-left-color: #444;
    border-right-width: 0;
  }

  .viewport {
    position: relative;
    display: flex;
    align-items: center;
    justify-content: center;
    flex: 1;
    min-width: 0;
    overflow: hidden;
    background: #c4c9d3;
  }

  .hud, .doc-buttons, .side-tabs, .splitter, .triad {
    position: absolute;
  }

  .hud {
    top: 3px;
    left: 50%;
    translate: -50%;
    display: flex;
    align-items: center;
    gap: 2px;
    color: #8a8f98;
  }

  .doc-buttons {
    top: 4px;
    right: 4px;
    display: flex;
    gap: 4px;
    color: #7b8089;
  }

  .side-tabs {
    top: 29px;
    right: 0;
    display: flex;
    flex-direction: column;
    border: 1px solid #a9adb5;
    border-right: 0;
    border-bottom: 0;
  }

  .side-tabs button {
    width: 13px;
    height: 14px;
    box-sizing: border-box;
    border-bottom: 1px solid #a9adb5;
    background: #d9d9d6;
  }

  .side-tabs button:nth-child(even) {
    height: 13px;
  }

  .side-tabs .active {
    background: #f7f7f7;
  }

  .splitter {
    left: 0;
    top: 48%;
    width: 5px;
    height: 22px;
    background: #f3f3f3;
    border-radius: 0 2px 2px 0;
  }

  .triad {
    left: 16px;
    bottom: 22px;
    font: 5px 'Liberation Sans', sans-serif;
  }

  .doc-tabs {
    display: flex;
    height: 10px;
    box-sizing: border-box;
    flex: none;
    border-top: 1px solid #d0d0d0;
  }

  .doc-tabs > button {
    padding: 0 4px;
    border-right: 1px solid #c4c4c4;
    background: #dadada;
  }

  .doc-tabs .active {
    background: #f9f9f9;
    font-size: 8px;
    font-weight: 700;
    padding: 0 6px;
  }

  .nav {
    display: flex;
    width: 37px;
    background: #b4b4c8;
    color: #8585a0;
  }

  .nav button {
    flex: 1;
    border-right: 1px solid #9d9db5;
  }

  .dock {
    display: flex;
    flex-direction: column;
    width: 290px;
    flex: none;
    background: #f7f7f7;
  }

  .dock-title {
    display: flex;
    align-items: center;
    gap: 3px;
    height: 13px;
    padding: 0 3px 0 5px;
    border-bottom: 1px solid #333;
    background: #a9a9a9;
    color: #111;
  }

  .dock-title span {
    font-size: 10px;
  }

  .dock-title b {
    flex: 1;
    text-align: center;
  }

  .panel {
    display: flex;
    flex-direction: column;
    flex: 1;
    min-height: 0;
    margin: 1px 0 0 3px;
    background: #fff;
    font-family: 'Liberation Sans', 'Noto Sans CJK SC', sans-serif;
  }

  .search-head {
    padding: 0 8px 3px;
    background: #005686;
    color: #fff;
  }

  .head-row {
    display: flex;
    align-items: center;
    gap: 7px;
    height: 25px;
    margin: 0 -5px 4px -4px;
  }

  .head-row h1 {
    flex: 1;
    font: 9px/12px 'Open Sans', 'Noto Sans CJK SC', sans-serif;
  }

  .head-row button {
    min-width: 9px;
    margin-right: 4px;
  }

  .head-row .find {
    color: #5db0ea;
  }

  .head-row .end {
    height: 14px;
    padding-left: 4px;
    margin: 0;
    border-left: 1px solid #b5cfdd;
  }

  .search-box {
    display: flex;
    align-items: center;
    gap: 12px;
    height: 17px;
    padding: 0 10px 0 6px;
    border-radius: 2px;
    background: #fff;
    color: #666;
    font-size: 8px;
  }

  .search-box input {
    flex: 1;
    outline: 0;
  }

  .summary {
    display: flex;
    align-items: center;
    gap: 6px;
    height: 32px;
    padding: 0 16px 0 3px;
    box-sizing: border-box;
    color: #6e6e6e;
    font-size: 11px;
  }

  .summary strong {
    color: #368ec4;
  }

  .summary span {
    margin-right: 2px;
  }

  .history {
    margin-right: auto;
    padding-left: 6px;
    border-left: 1px solid #ddd;
  }

  .sort {
    gap: 4px;
    height: 22px;
    padding: 0 4px;
    margin: 0 -2px;
    border: 1px solid #e2e2e2;
    border-radius: 3px;
    background: #f3f3f3;
  }

  .sort i {
    border: 3px solid transparent;
    border-top: 4px solid #333;
    border-bottom: 0;
  }

  .last {
    margin-left: 4px;
  }

  .list-wrap {
    display: flex;
    flex: 1;
    min-height: 0;
  }

  .results {
    flex: 1;
    min-width: 0;
    padding: 5px 10px 0 11px;
    overflow: hidden;
  }

  .results li {
    position: relative;
    display: flex;
    align-items: center;
    height: 39px;
    box-sizing: border-box;
    margin-bottom: 6px;
    padding: 0 5px 0 4px;
    border: 1px solid #f0f0f0;
  }

  .results .selected {
    border-color: #368ec4;
    box-shadow: 0 0 0 1px #368ec4;
  }

  .thumb {
    background: #f3f4f6;
  }

  .check {
    position: absolute;
    left: 34px;
    top: 5px;
  }

  .info {
    flex: 1;
    min-width: 0;
    margin-left: 5px;
  }

  .info h2 {
    display: flex;
    align-items: center;
    gap: 2px;
    height: 11px;
    font-size: 7px;
  }

  mark {
    padding: 0 1px;
    background: #cf9248;
    color: #000;
    font-weight: 700;
  }

  .info p {
    overflow: hidden;
    height: 12px;
    line-height: 14px;
    font-size: 6px;
    color: #8a8a8a;
  }

  .info .id {
    color: #555;
  }

  .expand {
    color: #555;
  }

  .scrollbar {
    display: flex;
    flex-direction: column;
    align-items: center;
    width: 9px;
    background: #f3f3f3;
    color: #555;
  }

  .scrollbar span {
    width: 7px;
    height: 26%;
    margin-bottom: auto;
    background: #c1c1c1;
  }

  footer {
    display: flex;
    align-items: center;
    height: 11px;
    flex: none;
    box-sizing: border-box;
    border-top: 1px solid #8a8a8a;
  }

  .editing {
    margin-left: auto;
    margin-right: 46px;
  }

  .dot {
    margin: 0 8px;
    font-size: 5px;
  }
</style>
